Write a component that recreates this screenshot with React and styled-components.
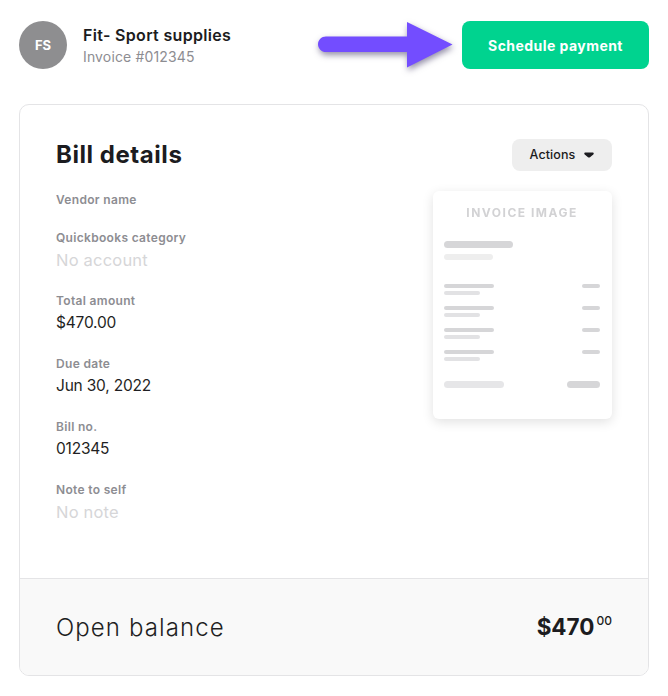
import React from "react";
import styled, { createGlobalStyle } from "styled-components";

const Global = createGlobalStyle`
html, body { margin: 0; padding: 0; background: #fff; }
body { font-family: Inter, "Open Sans", sans-serif; color: #1f1f23; }
* { box-sizing: border-box; }
`;

const Page = styled.div`
width: 668px;
height: 696px;
padding: 21px 19px 20px 19px;
display: flex;
flex-direction: column;
gap: 35px;
`;

const Header = styled.header`
display: flex;
align-items: center;
height: 48px;
`;

const Avatar = styled.div`
width: 48px;
height: 48px;
border-radius: 50%;
background: #8e8e90;
color: #fff;
font-size: 13px;
font-weight: 700;
display: flex;
align-items: center;
justify-content: center;
margin-right: 16px;
`;

const Vendor = styled.div`
display: flex;
flex-direction: column;
gap: 1px;
padding-bottom: 2px;
`;

const VendorName = styled.div`
font-size: 16px;
line-height: 24px;
font-weight: 600;
color: #1c1c20;
letter-spacing: 0.32px;
`;

const InvoiceNo = styled.div`
font-size: 14px;
line-height: 18px;
color: #8d8d92;
letter-spacing: 0.14px;
`;

const Arrow = styled.svg`
margin-left: auto;
margin-right: 9px;
overflow: visible;
filter: drop-shadow(1px 3px 3px rgba(40, 30, 80, 0.5));
`;

const PayButton = styled.button`
width: 187px;
height: 48px;
border: none;
border-radius: 8px;
background: #00d38f;
color: #fff;
font-family: inherit;
font-size: 14px;
font-weight: 700;
letter-spacing: 0.45px;
padding: 0;
`;

const Card = styled.section`
height: 572px;
border: 1px solid #e4e4e6;
border-radius: 10px;
overflow: hidden;
display: flex;
flex-direction: column;
`;

const CardBody = styled.div`
flex: 1;
padding: 34px 36px 0 36px;
`;

const TitleRow = styled.div`
display: flex;
justify-content: space-between;
align-items: center;
height: 32px;
`;

const Title = styled.h2`
margin: 0 0 2px 0;
font-size: 24px;
font-weight: 700;
color: #1c1c20;
letter-spacing: 0.55px;
`;

const ActionsButton = styled.button`
width: 100px;
height: 32px;
border: none;
border-radius: 8px;
background: #eeeeee;
color: #1c1c20;
font-family: inherit;
font-size: 12.5px;
font-weight: 500;
letter-spacing: 0.1px;
display: flex;
align-items: center;
justify-content: center;
gap: 9px;
padding: 0 0 1px 0;
`;

const Columns = styled.div`
display: flex;
justify-content: space-between;
align-items: flex-start;
`;

const Fields = styled.div`
display: flex;
flex-direction: column;
padding-top: 20px;
`;

const Field = styled.div`
height: ${(p) => (p.$short ? "38px" : "63px")};
`;

const Label = styled.div`
font-size: 12px;
line-height: 18px;
font-weight: 600;
color: #8d8d92;
letter-spacing: 0.32px;
`;

const Value = styled.div`
font-size: ${(p) => (p.$empty ? "16.5px" : "15.5px")};
line-height: 24px;
margin-top: 1px;
letter-spacing: ${(p) => (p.$empty ? "0.2px" : "-0.2px")};
color: ${(p) => (p.$empty ? "#d6d6d8" : "#1f1f23")};
`;

const InvoiceCard = styled.div`
width: 179px;
height: 228px;
margin-top: 20px;
padding: 14px 12px 0 11px;
border-radius: 6px;
background: #fff;
box-shadow: 0 3px 12px rgba(0, 0, 0, 0.12);
display: flex;
flex-direction: column;
`;

const InvoiceTitle = styled.div`
font-size: 12px;
line-height: 16px;
font-weight: 700;
letter-spacing: 1.5px;
text-align: center;
color: #d2d2d4;
filter: blur(0.4px);
margin-bottom: 20px;
`;

const Bar = styled.div`
width: ${(p) => p.$w}px;
height: ${(p) => p.$h || 4}px;
border-radius: 4px;
background: ${(p) => p.$c || "#d6d6d8"};
filter: blur(0.5px);
`;

const BarGroup = styled.div`
display: flex;
flex-direction: column;
gap: ${(p) => p.$gap}px;
`;

const LineItems = styled.div`
display: flex;
flex-direction: column;
gap: 10.9px;
margin-top: 24px;
`;

const LineItem = styled.div`
display: flex;
justify-content: space-between;
align-items: flex-start;
`;

const Totals = styled.div`
display: flex;
justify-content: space-between;
margin-top: 20px;
`;

const Footer = styled.footer`
height: 97px;
border-top: 1px solid #e4e4e6;
background: #f9f9f9;
padding: 0 36px;
display: flex;
justify-content: space-between;
align-items: center;
`;

const BalanceLabel = styled.div`
font-size: 24px;
font-weight: 300;
color: #1f1f23;
letter-spacing: 1.1px;
`;

const Balance = styled.div`
display: flex;
align-items: flex-start;
font-size: 22.5px;
line-height: 28px;
font-weight: 700;
color: #1c1c20;
`;

const Cents = styled.span`
font-size: 12px;
line-height: 16px;
font-weight: 500;
margin-left: 2px;
`;

const lineItems = [0, 1, 2, 3];

export default function App() {
  return (
    <Page>
      <Global />
      <Header>
        <Avatar>FS</Avatar>
        <Vendor>
          <VendorName>Fit- Sport supplies</VendorName>
          <InvoiceNo>Invoice #012345</InvoiceNo>
        </Vendor>
        <Arrow width="135" height="46" viewBox="0 0 135 46">
          <path
            d="M8 14.5H89V0L134.5 22.5L89 45.5V30H8C3.5 30 0 26.5 0 22.2C0 18 3.5 14.5 8 14.5Z"
            fill="#734dff"
          />
        </Arrow>
        <PayButton>Schedule payment</PayButton>
      </Header>
      <Card>
        <CardBody>
          <TitleRow>
            <Title>Bill details</Title>
            <ActionsButton>
              Actions
              <svg width="10" height="6" viewBox="0 0 10 6">
                <path d="M1.5 0.5H8.5C9.7 0.5 10.2 1.7 9.3 2.5L6 5.2C5.4 5.7 4.6 5.7 4 5.2L0.7 2.5C-0.2 1.7 0.3 0.5 1.5 0.5Z" fill="#1c1c20" />
              </svg>
            </ActionsButton>
          </TitleRow>
          <Columns>
            <Fields>
              <Field $short>
                <Label>Vendor name</Label>
              </Field>
              <Field>
                <Label>Quickbooks category</Label>
                <Value $empty>No account</Value>
              </Field>
              <Field>
                <Label>Total amount</Label>
                <Value>$470.00</Value>
              </Field>
              <Field>
                <Label>Due date</Label>
                <Value>Jun 30, 2022</Value>
              </Field>
              <Field>
                <Label>Bill no.</Label>
                <Value>012345</Value>
              </Field>
              <Field>
                <Label>Note to self</Label>
                <Value $empty>No note</Value>
              </Field>
            </Fields>
            <InvoiceCard>
              <InvoiceTitle>INVOICE IMAGE</InvoiceTitle>
              <BarGroup $gap={6}>
                <Bar $w={69} $h={7} />
                <Bar $w={49} $h={6} $c="#eeeeee" />
              </BarGroup>
              <LineItems>
                {lineItems.map((i) => (
                  <LineItem key={i}>
                    <BarGroup $gap={3}>
                      <Bar $w={50} />
                      <Bar $w={36} $c="#e2e2e4" />
                    </BarGroup>
                    <Bar $w={18} />
                  </LineItem>
                ))}
              </LineItems>
              <Totals>
                <Bar $w={60} $h={7} $c="#e6e6e8" />
                <Bar $w={33} $h={7} />
              </Totals>
            </InvoiceCard>
          </Columns>
        </CardBody>
        <Footer>
          <BalanceLabel>Open balance</BalanceLabel>
          <Balance>
            $470<Cents>00</Cents>
          </Balance>
        </Footer>
      </Card>
    </Page>
  );
}
